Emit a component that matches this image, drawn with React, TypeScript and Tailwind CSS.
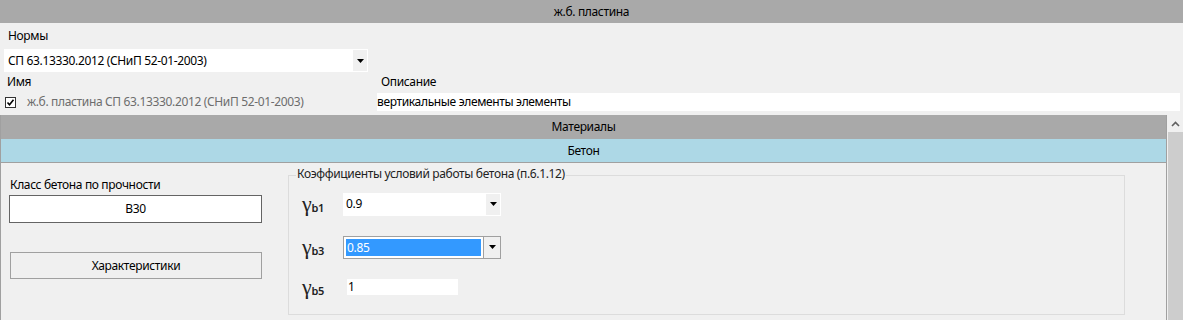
const font = { fontFamily: '"Noto Sans", "Liberation Sans", sans-serif', letterSpacing: '-0.35px' };

function Arrow() {
  return (
    <svg width="7" height="4" viewBox="0 0 7 4">
      <path d="M0 0h7L3.5 4z" fill="#000" />
    </svg>
  );
}

function Gamma({ sub }: { sub: string }) {
  return (
    <div className="w-[54px] flex items-end pl-[13px]">
      <span className="text-[22px] leading-none text-[#222]" style={{ fontFamily: '"Liberation Serif", serif' }}>
        γ
      </span>
      <span className="text-[11px] leading-none font-semibold text-[#222] mb-[2px]">{sub}</span>
    </div>
  );
}

export default function App() {
  return (
    <div className="w-[1183px] h-[320px] bg-[#f0f0f0] overflow-hidden text-[12px] text-black" style={font}>
      <div className="h-[23px] bg-[#a9a9a9] flex items-center justify-center">ж.б. пластина</div>

      <div className="pl-[8px] pt-[5px] h-[21px] leading-[16px]">Нормы</div>
      <div className="mt-[5px] ml-[4px] w-[364px] h-[23px] bg-white flex items-center">
        <span className="flex-1 pl-[4px]">СП 63.13330.2012 (СНиП 52-01-2003)</span>
        <div className="w-[16px] h-full bg-[#f0f0f0] border border-white flex items-center justify-center">
          <Arrow />
        </div>
      </div>

      <div className="flex mt-[2px] h-[16px] leading-[16px]">
        <div className="w-[377px] pl-[7px]">Имя</div>
        <div className="pl-[4px]">Описание</div>
      </div>
      <div className="flex mt-[3px] h-[18px] items-center">
        <div className="w-[377px] flex items-center">
          <svg className="ml-[5px]" width="11" height="11" viewBox="0 0 11 11">
            <rect x="0.5" y="0.5" width="10" height="10" fill="#fff" stroke="#333" />
            <path d="M2.5 5.5l2 2.2 4-5" fill="none" stroke="#000" strokeWidth="1.6" />
          </svg>
          <span className="ml-[11px] text-[#6d6d6d]">ж.б. пластина СП 63.13330.2012 (СНиП 52-01-2003)</span>
        </div>
        <div className="w-[803px] h-[18px] bg-white leading-[18px]">вертикальные элементы элементы</div>
      </div>

      <div className="flex mt-[4px] h-[205px]">
        <div className="w-[1167px] border-l border-r border-[#a0a0a0] flex flex-col">
          <div className="h-[24px] bg-[#a9a9a9] flex items-center justify-center">Материалы</div>
          <div className="h-[24px] bg-[#add8e6] border-b border-[#a0a0a0] flex items-center justify-center">Бетон</div>
          <div className="flex flex-1">
            <div className="w-[287px] pl-[8px] pt-[14px]">
              <div className="pl-[1px] leading-[16px]">Класс бетона по прочности</div>
              <div className="mt-[2px] w-[253px] h-[28px] bg-white border border-[#646464] flex items-center justify-center">
                B30
              </div>
              <div className="mt-[29px] ml-[1px] w-[252px] h-[27px] border border-[#a0a0a0] flex items-center justify-center">
                Характеристики
              </div>
            </div>
            <div className="relative mt-[12px] w-[837px] h-[140px] border border-[#dcdcdc]">
              <span className="absolute left-[7px] -top-[10px] bg-[#f0f0f0] px-[1px] leading-[16px] text-[#222]">
                Коэффициенты условий работы бетона (п.6.1.12)
              </span>
              <div className="flex flex-col pt-[16px]">
                <div className="flex items-center h-[24px]">
                  <Gamma sub="b1" />
                  <div className="w-[158px] h-[23px] bg-white flex items-center">
                    <span className="flex-1 pl-[3px]">0.9</span>
                    <div className="w-[16px] h-full bg-[#f0f0f0] border border-white flex items-center justify-center">
                      <Arrow />
                    </div>
                  </div>
                </div>
                <div className="flex items-center h-[24px] mt-[19px]">
                  <Gamma sub="b3" />
                  <div className="w-[158px] h-[23px] bg-white border border-[#a0a0a0] flex items-center">
                    <div className="flex-1 h-full p-[2px] border-r border-[#a0a0a0]">
                      <div className="h-full bg-[#3399ff] text-white leading-[17px] pl-[1px]">0.85</div>
                    </div>
                    <div className="w-[16px] h-full bg-[#f0f0f0] flex items-center justify-center">
                      <Arrow />
                    </div>
                  </div>
                </div>
                <div className="flex items-center h-[24px] mt-[16px]">
                  <Gamma sub="b5" />
                  <div className="ml-[4px] w-[111px] h-[16px] bg-white leading-[16px] pl-[1px]">1</div>
                </div>
              </div>
            </div>
          </div>
        </div>
        <div className="w-[15px] ml-[1px] flex flex-col">
          <div className="h-[17px] flex items-center justify-center">
            <svg width="9" height="6" viewBox="0 0 9 6">
              <path d="M1 5l3.5-3.5L8 5" fill="none" stroke="#606060" strokeWidth="1.6" />
            </svg>
          </div>
          <div className="flex-1 bg-[#cdcdcd]" />
        </div>
      </div>
    </div>
  );
}
